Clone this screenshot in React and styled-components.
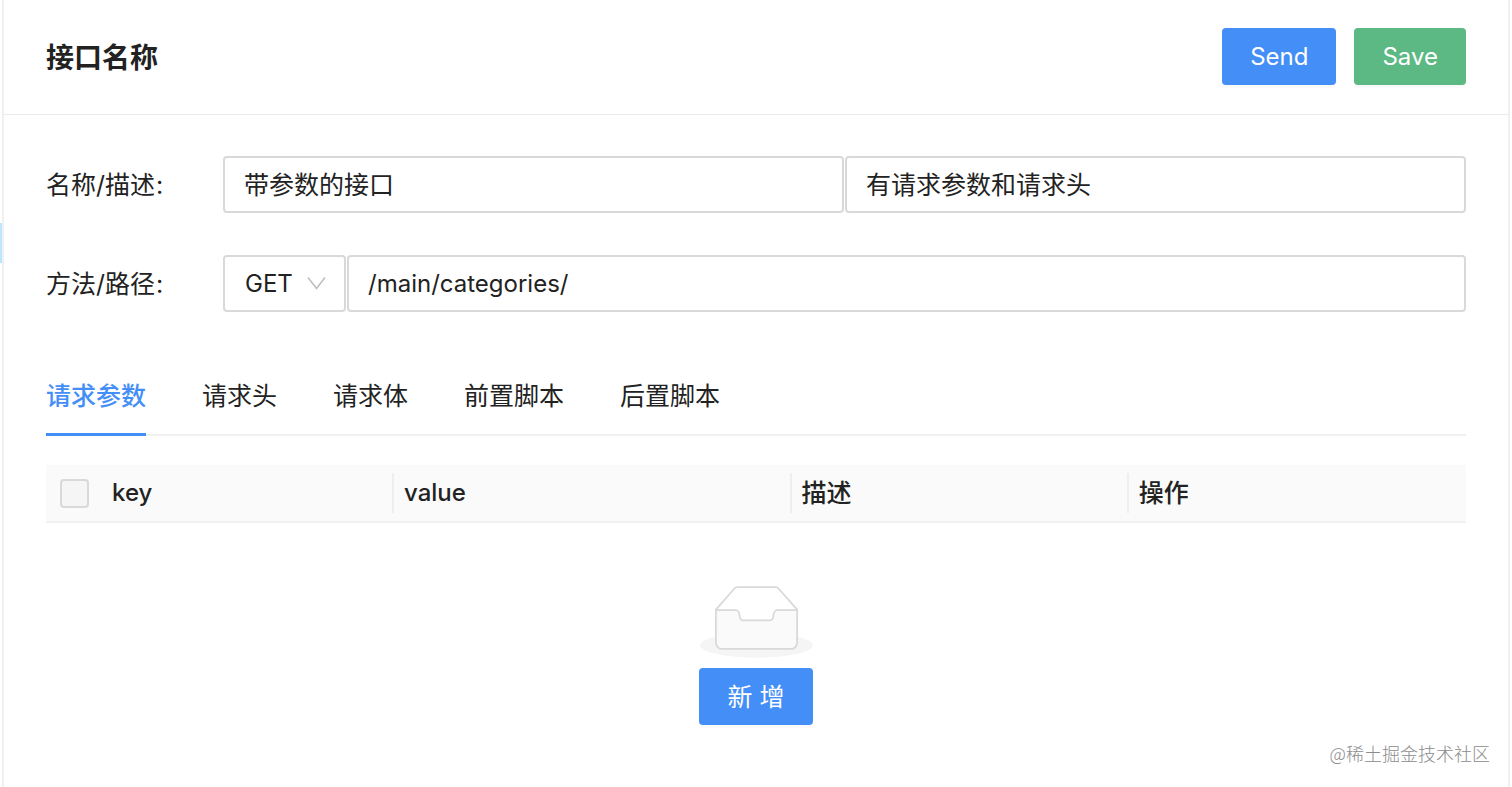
import { useState } from 'react';
import styled, { createGlobalStyle } from 'styled-components';

const GlobalStyle = createGlobalStyle`
    * {
        box-sizing: border-box;
    }

    body {
        margin: 0;
        background-color: #ffffff;
        color: #222222;
        font-family: Inter, "Noto Sans CJK SC", sans-serif;
        font-size: 25px;
        line-height: 40px;
    }

    button, input, select {
        font: inherit;
        color: inherit;
    }
`

const Page = styled.div`
    position: relative;
    display: flex;
    min-height: 100vh;
    padding: 0 2px;
`

// edge of the sidebar selection, peeks out left of the card
const SidebarEdge = styled.div`
    position: absolute;
    left: 0;
    top: 223px;
    width: 2px;
    height: 40px;
    background-color: #bae7ff;
`

const Card = styled.main`
    flex: 1;
    min-width: 0;
    border: 2px solid #f0f0f0;
    border-width: 0 2px;
`

const CardHeader = styled.header`
    display: flex;
    align-items: center;
    justify-content: space-between;
    padding: 28px 42px 29px;
    border-bottom: 1px solid #ebebeb;
`

const Title = styled.h1`
    margin: 0;
    padding-top: 2px;
    font-size: 28px;
    font-weight: 600;
`

const Actions = styled.div`
    display: flex;
    gap: 18px;
`

const Button = styled.button`
    height: 57px;
    padding: 0 28px;
    border: none;
    border-radius: 4px;
    background-color: ${(props) => props.$color || '#448ef7'};
    color: #ffffff;
    font-size: ${(props) => (props.$latin ? '24px' : '25px')};
    box-shadow: 0 3px 0 rgba(0, 0, 0, 0.02);
    cursor: pointer;
`

const CardBody = styled.div`
    padding: 41px 42px;
`

const Form = styled.form`
    display: grid;
    row-gap: 42px;
`

const FormRow = styled.div`
    display: grid;
    grid-template-columns: 177px 1fr;
    align-items: center;
`

const Colon = styled.span`
    margin-left: 1px;
`

const Fields = styled.div`
    display: flex;
    gap: 1px;
`

const TextInput = styled.input`
    flex: 1;
    min-width: 0;
    height: 57px;
    padding: ${(props) => (props.$latin ? '0 19px' : '0 19px 4px')};
    border: 2px solid #d9d9d9;
    border-radius: 4px;
    background-color: #ffffff;
    font-size: ${(props) => (props.$latin ? '24px' : '25px')};
    outline: none;
`

const SelectBox = styled.div`
    position: relative;
    width: 123px;
`

const Select = styled.select`
    appearance: none;
    width: 100%;
    height: 57px;
    padding: 0 20px;
    border: 2px solid #d9d9d9;
    border-radius: 4px;
    background-color: #ffffff;
    font-size: 24px;
    outline: none;
`

const Arrow = styled.svg`
    position: absolute;
    right: 20px;
    top: 20px;
    width: 20px;
    height: 16px;
    pointer-events: none;
`

const TabBar = styled.div`
    display: flex;
    gap: 56px;
    margin-top: 42px;
    border-bottom: 2px solid #f0f0f0;
`

const Tab = styled.button`
    height: 82px;
    margin-bottom: -2px;
    padding: 4px 0 0;
    border: none;
    border-bottom: 3px solid ${(props) => (props.$active ? '#448ef7' : 'transparent')};
    background: none;
    color: ${(props) => (props.$active ? '#448ef7' : 'inherit')};
    font-weight: ${(props) => (props.$active ? 500 : 400)};
    cursor: pointer;
`

const Table = styled.table`
    width: 100%;
    margin-top: 29px;
    table-layout: fixed;
    border-collapse: separate;
    border-spacing: 0;
`

const Th = styled.th`
    width: ${(props) => props.$width || 'auto'};
    height: 58px;
    padding: 8px 0;
    border-bottom: 2px solid #f0f0f0;
    background-color: #fafafa;
    text-align: left;
    font-size: ${(props) => (props.$latin ? '24px' : '25px')};
    font-weight: 500;
`

const ThText = styled.div`
    padding-left: 10px;
    border-right: ${(props) => (props.$last ? 'none' : '2px solid #eeeeee')};
`

const CheckBox = styled.input`
    appearance: none;
    display: block;
    width: 29px;
    height: 29px;
    margin: 0 0 0 14px;
    border: 2px solid #d9d9d9;
    border-radius: 4px;
    background-color: #f5f5f5;
`

const Empty = styled.div`
    display: flex;
    flex-direction: column;
    align-items: center;
    gap: 10px;
    padding-top: 62px;
`

const EmptyImage = styled.svg`
    width: 113px;
    height: 73px;
`

const Watermark = styled.div`
    position: absolute;
    right: 22px;
    bottom: 22px;
    color: #8c8c8c;
    font-family: "Noto Sans CJK SC", sans-serif;
    font-size: 18px;
    font-weight: 300;
    line-height: 24px;
`

const tabs = ['请求参数', '请求头', '请求体', '前置脚本', '后置脚本'];

const App = () => {

    const [name, setName] = useState('带参数的接口');
    const [desc, setDesc] = useState('有请求参数和请求头');
    const [method, setMethod] = useState('GET');
    const [path, setPath] = useState('/main/categories/');
    const [activeTab, setActiveTab] = useState(0);

    return (
        <Page>
            <GlobalStyle />
            <SidebarEdge />
            <Card>
                <CardHeader>
                    <Title>接口名称</Title>
                    <Actions>
                        <Button type="button" $latin>Send</Button>
                        <Button type="button" $latin $color="#5cb983">Save</Button>
                    </Actions>
                </CardHeader>
                <CardBody>
                    <Form onSubmit={(e) => e.preventDefault()}>
                        <FormRow>
                            <label htmlFor="name">名称/描述<Colon>:</Colon></label>
                            <Fields>
                                <TextInput id="name" type="text" value={name} onChange={(e) => setName(e.target.value)} />
                                <TextInput aria-label="描述" type="text" value={desc} onChange={(e) => setDesc(e.target.value)} />
                            </Fields>
                        </FormRow>
                        <FormRow>
                            <label htmlFor="method">方法/路径<Colon>:</Colon></label>
                            <Fields>
                                <SelectBox>
                                    <Select id="method" value={method} onChange={(e) => setMethod(e.target.value)}>
                                        <option>GET</option>
                                        <option>POST</option>
                                        <option>PUT</option>
                                    </Select>
                                    <Arrow viewBox="0 0 20 16" fill="none" stroke="#bfbfbf" strokeWidth="1.6">
                                        <path d="M2 2.5L10.5 13.5L19 2.5" />
                                    </Arrow>
                                </SelectBox>
                                <TextInput aria-label="路径" type="text" $latin value={path} onChange={(e) => setPath(e.target.value)} />
                            </Fields>
                        </FormRow>
                    </Form>

                    <TabBar role="tablist">
                        {tabs.map((tab, i) => (
                            <Tab key={tab} type="button" role="tab" aria-selected={i === activeTab} $active={i === activeTab} onClick={() => setActiveTab(i)}>
                                {tab}
                            </Tab>
                        ))}
                    </TabBar>

                    <Table>
                        <thead>
                            <tr>
                                <Th $width="56px"><CheckBox type="checkbox" aria-label="全选" disabled /></Th>
                                <Th $latin $width="292px"><ThText>key</ThText></Th>
                                <Th $latin $width="28%"><ThText>value</ThText></Th>
                                <Th><ThText>描述</ThText></Th>
                                <Th><ThText $last>操作</ThText></Th>
                            </tr>
                        </thead>
                    </Table>

                    <Empty>
                        <EmptyImage viewBox="0 0 64 41">
                            <ellipse cx="32" cy="34" rx="32" ry="7" fill="#f5f5f5" />
                            <g transform="translate(0 1)" stroke="#d9d9d9">
                                <path fill="#ffffff" d="M55 12.76L44.854 1.258C44.367.474 43.656 0 42.907 0H21.093c-.749 0-1.46.474-1.947 1.257L9 12.761V22h46v-9.24z" />
                                <path fill="#fafafa" d="M41.613 15.931c0-1.605.994-2.93 2.227-2.931H55v18.137C55 33.26 53.68 35 52.05 35h-40.1C10.32 35 9 33.259 9 31.137V13h11.16c1.233 0 2.227 1.323 2.227 2.928v.022c0 1.605 1.005 2.901 2.237 2.901h14.752c1.232 0 2.237-1.308 2.237-2.913v-.007z" />
                            </g>
                        </EmptyImage>
                        <Button type="button">新 增</Button>
                    </Empty>
                </CardBody>
            </Card>
            <Watermark>@稀土掘金技术社区</Watermark>
        </Page>
    );
}

export default App;
